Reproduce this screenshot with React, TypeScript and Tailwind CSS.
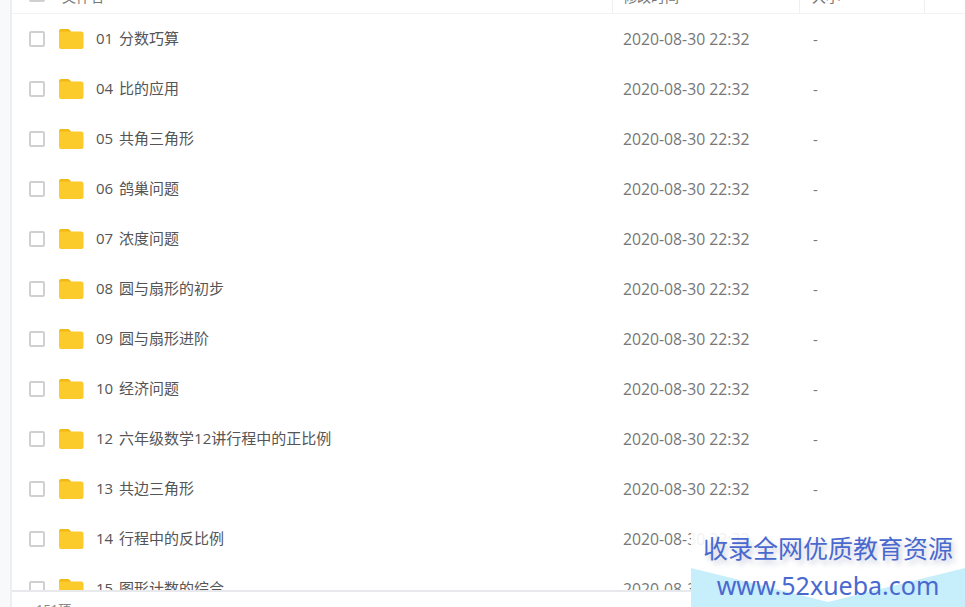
const rows = [
  '01 分数巧算',
  '04 比的应用',
  '05 共角三角形',
  '06 鸽巢问题',
  '07 浓度问题',
  '08 圆与扇形的初步',
  '09 圆与扇形进阶',
  '10 经济问题',
  '12 六年级数学12讲行程中的正比例',
  '13 共边三角形',
  '14 行程中的反比例',
  '15 图形计数的综合',
];

function Checkbox() {
  return <span className="block size-4 shrink-0 rounded-[2px] border-2 border-[#d0d0d0] bg-white" />;
}

function Folder() {
  return (
    <svg width="26" height="22" viewBox="0 0 26 22" className="shrink-0">
      <path d="M1 3A2 2 0 0 1 3 1h6.500c1 0 1.600.4 2.200 1.100L13 3.500v2H1z" fill="#f2b916" />
      <path d="M1 5a1.500 1.500 0 0 1 1.500-1.500H23A2.500 2.500 0 0 1 25.500 6v13a2 2 0 0 1-2 2H3a2 2 0 0 1-2-2z" fill="#fbca2b" />
    </svg>
  );
}

function Row({ name }: { name: string }) {
  return (
    <div className="flex h-[50px] shrink-0 items-center">
      <div className="flex w-[600px] items-center pl-[17px]">
        <Checkbox />
        <div className="ml-[13px]"><Folder /></div>
        <span className="mb-[1px] ml-[12px] text-[15px] text-[#555] [word-spacing:2px]">{name}</span>
      </div>
      <div className="mt-[1px] w-[189px] pl-[11px] text-[15.750px] text-[#777]">2020-08-30 22:32</div>
      <div className="mt-[1px] pl-[12px] text-[15px] text-[#777]">-</div>
    </div>
  );
}

export default function App() {
  return (
    <div className="relative flex h-[607px] w-[965px] overflow-hidden bg-white font-['Open_Sans','Noto_Sans_CJK_SC',sans-serif]">
      <div className="w-3 shrink-0 border-r-2 border-[#eceef1] bg-[#f8f9fa]" />
      <div className="flex min-w-0 flex-1 flex-col">
        <div className="-mt-[20px] flex h-[34px] shrink-0 items-center border-b border-[#f1f2f4] text-[14px] text-[#777]">
          <div className="flex w-[600px] items-center pl-[17px]">
            <div className="mb-[5px]"><Checkbox /></div>
            <span className="ml-[17px]">文件名</span>
          </div>
          <div className="flex h-full w-[187px] items-center border-l border-[#eeeff1] pl-[10px]">修改时间</div>
          <div className="flex h-full w-[126px] items-center border-r border-l border-[#eeeff1] pl-[12px]">大小</div>
        </div>
        <div className="flex min-h-0 flex-1 flex-col overflow-hidden">
          {rows.map((r) => <Row key={r} name={r} />)}
        </div>
        <div className="-mb-[9px] h-[26px] shrink-0 border-t-2 border-[#e8e9ec] bg-white pt-[8px] pl-[24px] text-[13px] text-[#888]">151项</div>
      </div>
      {/* watermark */}
      <div className="absolute right-0 bottom-0 h-[80px] w-[274px] bg-white/90 font-['Noto_Sans','Noto_Sans_CJK_SC',sans-serif] text-[#4a69cf]">
        <div className="absolute inset-x-0 bottom-0 h-[39px] bg-[#c6eefb] [clip-path:polygon(0_0,50%_34px,100%_0,100%_100%,0_100%)]" />
        <div className="relative flex flex-col items-center">
          <div className="mt-[3px] text-[25px] leading-[37px] [text-shadow:3px_4px_5px_rgba(90,100,150,0.3)]">收录全网优质教育资源</div>
          <div className="text-[25px] leading-[36px]">www.52xueba.com</div>
        </div>
      </div>
    </div>
  );
}
